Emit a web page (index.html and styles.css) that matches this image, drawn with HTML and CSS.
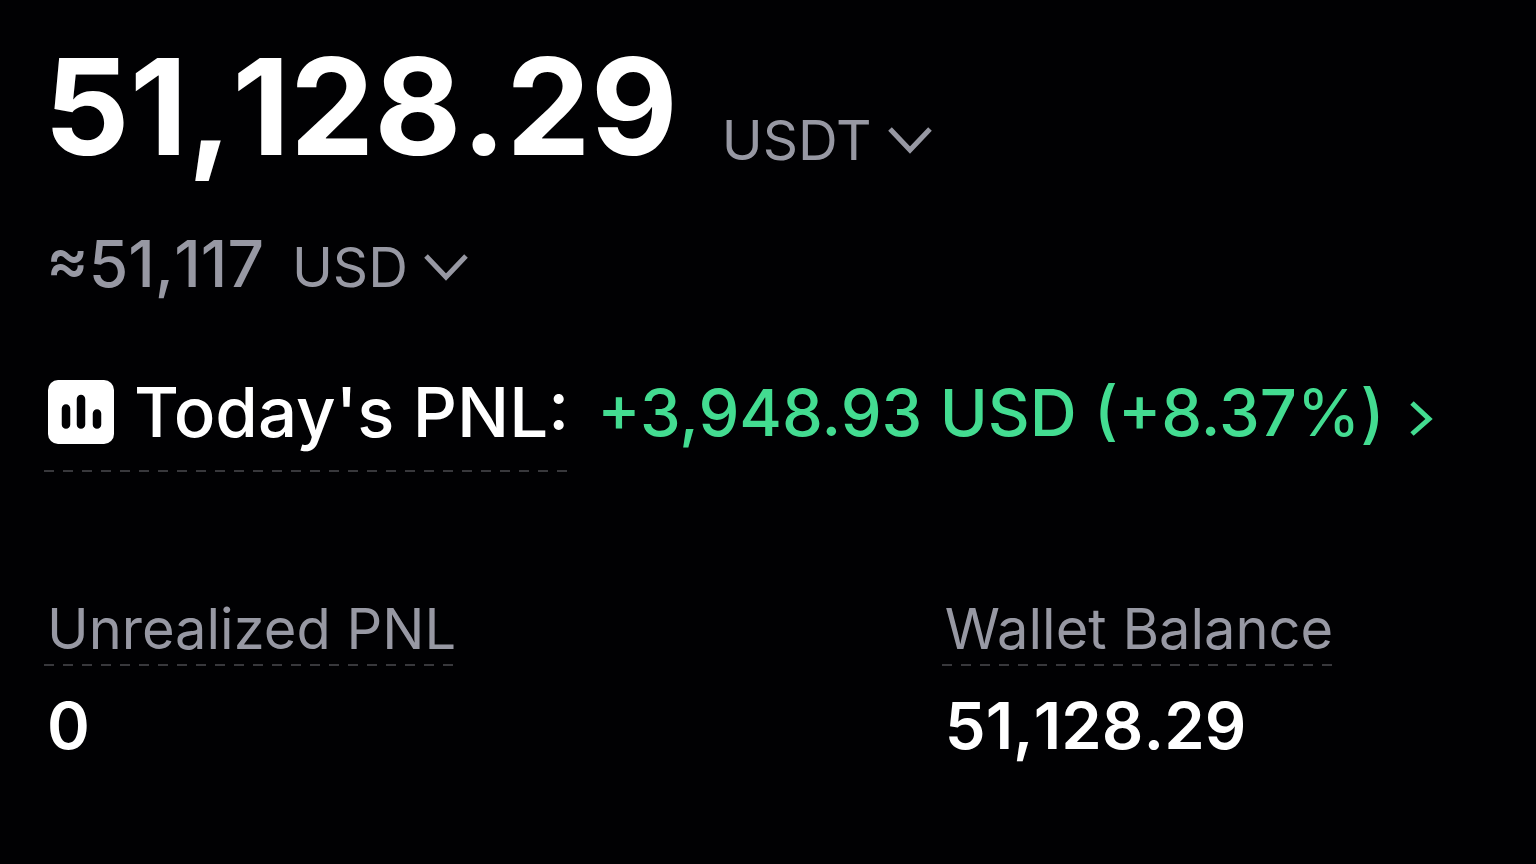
FILE: index.html
```html
<!DOCTYPE html>
<html lang="en">

<head>
  <meta charset="UTF-8">
  <meta name="viewport" content="width=device-width, initial-scale=1.0">
  <title>Wallet Overview</title>
  <link rel="stylesheet" href="styles.css">
</head>

<body>

  <main class="wallet">
    <div class="balance">
      <h1 class="balance-amount">51,128.29</h1>
      <button class="currency-button" type="button">
        USDT
        <svg class="chevron" viewBox="0 0 44 28" aria-hidden="true">
          <path d="M2 3 L22 24 L42 3"></path>
        </svg>
      </button>
    </div>

    <div class="fiat">
      <span class="fiat-amount">≈51,117</span>
      <button class="currency-button" type="button">
        USD
        <svg class="chevron" viewBox="0 0 44 28" aria-hidden="true">
          <path d="M2 3 L22 24 L42 3"></path>
        </svg>
      </button>
    </div>

    <div class="pnl">
      <div class="pnl-label dashed">
        <svg class="pnl-icon" viewBox="0 0 66 64" aria-hidden="true">
          <rect width="66" height="64" rx="10" fill="#fff"></rect>
          <path d="M18 28.5 V44.5 M33 19 V44.5 M49 33.5 V44.5" stroke="#010103" stroke-width="8.5" stroke-linecap="round"></path>
        </svg>
        <h2>Today's PNL:</h2>
      </div>
      <a class="pnl-value" href="#">
        <span>+3,948.93 USD (+8.37<span class="percent">%</span>)</span>
        <svg class="arrow" viewBox="0 0 24 36" aria-hidden="true">
          <path d="M3 3 L20 19 L3 34"></path>
        </svg>
      </a>
    </div>

    <div class="stats">
      <div class="stat">
        <h3 class="dashed">Unrealized PNL</h3>
        <p>0</p>
      </div>
      <div class="stat">
        <h3 class="dashed">Wallet Balance</h3>
        <p>51,128.29</p>
      </div>
    </div>
  </main>

</body>

</html>
```

FILE: styles.css
```css
body {
  font-family: Inter, sans-serif;
  margin: 0;
  background-color: #010103;
  color: #fff;
}

h1, h2, h3, p {
  margin: 0;
}

.wallet {
  padding: 40px 44px;
}

.balance {
  display: flex;
  align-items: flex-end;
  gap: 44px;
}

.balance-amount {
  font-size: 134px;
  line-height: 132px;
  font-weight: 700;
}

/* keep the digits evenly spaced around commas */
.balance-amount,
.fiat-amount,
.stat p {
  font-kerning: none;
}

.currency-button {
  display: flex;
  align-items: center;
  gap: 16px;
  padding: 0;
  border: none;
  background: none;
  color: #9798a3;
  font-family: inherit;
  font-size: 55px;
  line-height: 64px;
  cursor: pointer;
}

.chevron {
  width: 44px;
  height: 28px;
}

.chevron path,
.arrow path {
  fill: none;
  stroke: currentColor;
  stroke-width: 5;
}

.fiat {
  display: flex;
  align-items: baseline;
  gap: 28px;
  margin-top: 52px;
  padding-left: 2px;
  color: #9798a3;
}

.fiat-amount {
  font-size: 64px;
  line-height: 80px;
  font-weight: 500;
}

/* dashed underline with long gaps */
.dashed {
  background: repeating-linear-gradient(to right, #38383c 0 10px, transparent 10px 19px) left bottom / 100% 2px no-repeat;
}

.pnl {
  display: flex;
  align-items: flex-start;
  gap: 28px;
  margin-top: 64px;
}

.pnl-label {
  display: flex;
  align-items: center;
  gap: 20px;
  padding: 0 0 16px 4px;
}

.pnl-icon {
  width: 66px;
  height: 64px;
}

.pnl-label h2 {
  font-size: 69px;
  line-height: 88px;
  font-weight: 500;
}

.pnl-value {
  display: flex;
  align-items: baseline;
  gap: 24px;
  color: #43dc91;
  font-size: 65px;
  line-height: 90px;
  font-weight: 500;
  text-decoration: none;
}

.percent {
  font-weight: 400;
}

.arrow {
  width: 24px;
  height: 36px;
}

.stats {
  display: grid;
  grid-template-columns: 62% 1fr;
  margin-top: 124px;
}

.stat h3 {
  display: inline-block;
  padding: 0 2px 4px 3px;
  color: #9798a3;
  font-size: 56px;
  line-height: 66px;
  font-weight: 400;
}

.stat p {
  margin-top: 20px;
  padding-left: 3px;
  font-size: 65px;
  line-height: 80px;
  font-weight: 600;
}
```
